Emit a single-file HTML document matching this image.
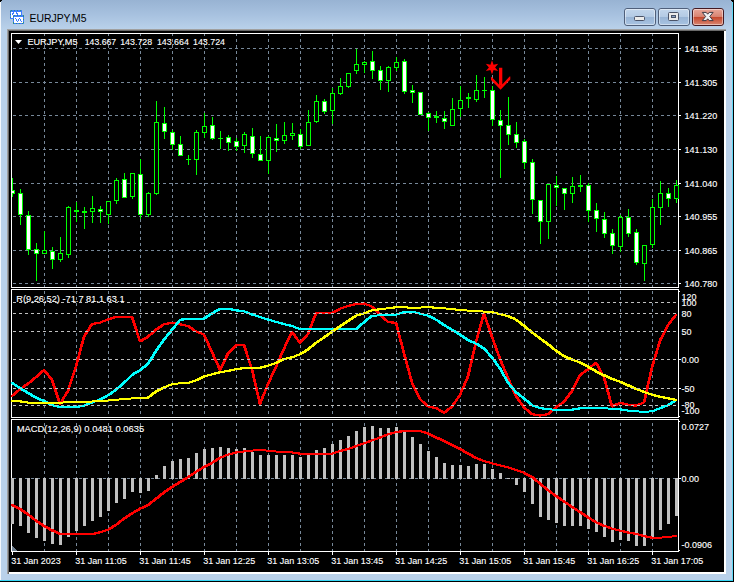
<!DOCTYPE html>
<html><head><meta charset="utf-8"><title>EURJPY,M5</title>
<style>html,body{margin:0;padding:0;background:#b9d1ea;overflow:hidden}svg{display:block}text{font-family:"Liberation Sans",Arial,sans-serif;font-size:9px;fill:#fff;stroke:#fff;stroke-width:0.12px}.t{font-size:11.5px;fill:#000;stroke:none}</style></head><body>
<svg width="734" height="582" viewBox="0 0 734 582">
<defs><linearGradient id="tb" x1="0" y1="0" x2="0" y2="1"><stop offset="0" stop-color="#98b3d3"/><stop offset="0.5" stop-color="#a7c1df"/><stop offset="1" stop-color="#b9d1ea"/></linearGradient><linearGradient id="bt" x1="0" y1="0" x2="0" y2="1"><stop offset="0" stop-color="#c3d6ec"/><stop offset="0.47" stop-color="#b4cbe5"/><stop offset="0.5" stop-color="#98b4d5"/><stop offset="1" stop-color="#a9c4e2"/></linearGradient><linearGradient id="cl" x1="0" y1="0" x2="0" y2="1"><stop offset="0" stop-color="#e9a99c"/><stop offset="0.47" stop-color="#d98472"/><stop offset="0.5" stop-color="#c5452a"/><stop offset="1" stop-color="#d98a76"/></linearGradient></defs>
<rect x="0" y="0" width="734" height="582" fill="#b9d1ea"/>
<rect x="0" y="0" width="734" height="29" fill="url(#tb)"/>
<rect x="0" y="2" width="1" height="580" fill="#f4f8fc"/>
<rect x="732" y="2" width="1" height="579" fill="#5fd8f5"/>
<rect x="733" y="0" width="1" height="582" fill="#000"/>
<rect x="0" y="580" width="733" height="1" fill="#35d6f5"/>
<rect x="0" y="581" width="734" height="1" fill="#000"/>
<rect x="0" y="0" width="2" height="1" fill="#000"/>
<rect x="0" y="1" width="1" height="1" fill="#000"/>
<rect x="731" y="0" width="3" height="1" fill="#000"/>
<rect x="732" y="1" width="2" height="1" fill="#000"/>
<rect x="7" y="29" width="719" height="545" fill="#a0a0a0"/>
<rect x="8" y="30" width="718" height="544" fill="#696969"/>
<rect x="9" y="31" width="717" height="543" fill="#fff"/>
<rect x="9" y="31" width="715" height="541" fill="#000"/>
<g shape-rendering="crispEdges">
<line x1="44.5" y1="34" x2="44.5" y2="287" stroke="#778899" stroke-width="1" stroke-dasharray="3 3" stroke-dashoffset="1"/>
<line x1="44.5" y1="290" x2="44.5" y2="417" stroke="#778899" stroke-width="1" stroke-dasharray="3 3" stroke-dashoffset="5"/>
<line x1="44.5" y1="420" x2="44.5" y2="551" stroke="#778899" stroke-width="1" stroke-dasharray="3 3" stroke-dashoffset="3"/>
<line x1="76.5" y1="34" x2="76.5" y2="287" stroke="#778899" stroke-width="1" stroke-dasharray="3 3" stroke-dashoffset="1"/>
<line x1="76.5" y1="290" x2="76.5" y2="417" stroke="#778899" stroke-width="1" stroke-dasharray="3 3" stroke-dashoffset="5"/>
<line x1="76.5" y1="420" x2="76.5" y2="551" stroke="#778899" stroke-width="1" stroke-dasharray="3 3" stroke-dashoffset="3"/>
<line x1="108.5" y1="34" x2="108.5" y2="287" stroke="#778899" stroke-width="1" stroke-dasharray="3 3" stroke-dashoffset="1"/>
<line x1="108.5" y1="290" x2="108.5" y2="417" stroke="#778899" stroke-width="1" stroke-dasharray="3 3" stroke-dashoffset="5"/>
<line x1="108.5" y1="420" x2="108.5" y2="551" stroke="#778899" stroke-width="1" stroke-dasharray="3 3" stroke-dashoffset="3"/>
<line x1="140.5" y1="34" x2="140.5" y2="287" stroke="#778899" stroke-width="1" stroke-dasharray="3 3" stroke-dashoffset="1"/>
<line x1="140.5" y1="290" x2="140.5" y2="417" stroke="#778899" stroke-width="1" stroke-dasharray="3 3" stroke-dashoffset="5"/>
<line x1="140.5" y1="420" x2="140.5" y2="551" stroke="#778899" stroke-width="1" stroke-dasharray="3 3" stroke-dashoffset="3"/>
<line x1="172.5" y1="34" x2="172.5" y2="287" stroke="#778899" stroke-width="1" stroke-dasharray="3 3" stroke-dashoffset="1"/>
<line x1="172.5" y1="290" x2="172.5" y2="417" stroke="#778899" stroke-width="1" stroke-dasharray="3 3" stroke-dashoffset="5"/>
<line x1="172.5" y1="420" x2="172.5" y2="551" stroke="#778899" stroke-width="1" stroke-dasharray="3 3" stroke-dashoffset="3"/>
<line x1="204.5" y1="34" x2="204.5" y2="287" stroke="#778899" stroke-width="1" stroke-dasharray="3 3" stroke-dashoffset="1"/>
<line x1="204.5" y1="290" x2="204.5" y2="417" stroke="#778899" stroke-width="1" stroke-dasharray="3 3" stroke-dashoffset="5"/>
<line x1="204.5" y1="420" x2="204.5" y2="551" stroke="#778899" stroke-width="1" stroke-dasharray="3 3" stroke-dashoffset="3"/>
<line x1="236.5" y1="34" x2="236.5" y2="287" stroke="#778899" stroke-width="1" stroke-dasharray="3 3" stroke-dashoffset="1"/>
<line x1="236.5" y1="290" x2="236.5" y2="417" stroke="#778899" stroke-width="1" stroke-dasharray="3 3" stroke-dashoffset="5"/>
<line x1="236.5" y1="420" x2="236.5" y2="551" stroke="#778899" stroke-width="1" stroke-dasharray="3 3" stroke-dashoffset="3"/>
<line x1="268.5" y1="34" x2="268.5" y2="287" stroke="#778899" stroke-width="1" stroke-dasharray="3 3" stroke-dashoffset="1"/>
<line x1="268.5" y1="290" x2="268.5" y2="417" stroke="#778899" stroke-width="1" stroke-dasharray="3 3" stroke-dashoffset="5"/>
<line x1="268.5" y1="420" x2="268.5" y2="551" stroke="#778899" stroke-width="1" stroke-dasharray="3 3" stroke-dashoffset="3"/>
<line x1="300.5" y1="34" x2="300.5" y2="287" stroke="#778899" stroke-width="1" stroke-dasharray="3 3" stroke-dashoffset="1"/>
<line x1="300.5" y1="290" x2="300.5" y2="417" stroke="#778899" stroke-width="1" stroke-dasharray="3 3" stroke-dashoffset="5"/>
<line x1="300.5" y1="420" x2="300.5" y2="551" stroke="#778899" stroke-width="1" stroke-dasharray="3 3" stroke-dashoffset="3"/>
<line x1="332.5" y1="34" x2="332.5" y2="287" stroke="#778899" stroke-width="1" stroke-dasharray="3 3" stroke-dashoffset="1"/>
<line x1="332.5" y1="290" x2="332.5" y2="417" stroke="#778899" stroke-width="1" stroke-dasharray="3 3" stroke-dashoffset="5"/>
<line x1="332.5" y1="420" x2="332.5" y2="551" stroke="#778899" stroke-width="1" stroke-dasharray="3 3" stroke-dashoffset="3"/>
<line x1="364.5" y1="34" x2="364.5" y2="287" stroke="#778899" stroke-width="1" stroke-dasharray="3 3" stroke-dashoffset="1"/>
<line x1="364.5" y1="290" x2="364.5" y2="417" stroke="#778899" stroke-width="1" stroke-dasharray="3 3" stroke-dashoffset="5"/>
<line x1="364.5" y1="420" x2="364.5" y2="551" stroke="#778899" stroke-width="1" stroke-dasharray="3 3" stroke-dashoffset="3"/>
<line x1="396.5" y1="34" x2="396.5" y2="287" stroke="#778899" stroke-width="1" stroke-dasharray="3 3" stroke-dashoffset="1"/>
<line x1="396.5" y1="290" x2="396.5" y2="417" stroke="#778899" stroke-width="1" stroke-dasharray="3 3" stroke-dashoffset="5"/>
<line x1="396.5" y1="420" x2="396.5" y2="551" stroke="#778899" stroke-width="1" stroke-dasharray="3 3" stroke-dashoffset="3"/>
<line x1="428.5" y1="34" x2="428.5" y2="287" stroke="#778899" stroke-width="1" stroke-dasharray="3 3" stroke-dashoffset="1"/>
<line x1="428.5" y1="290" x2="428.5" y2="417" stroke="#778899" stroke-width="1" stroke-dasharray="3 3" stroke-dashoffset="5"/>
<line x1="428.5" y1="420" x2="428.5" y2="551" stroke="#778899" stroke-width="1" stroke-dasharray="3 3" stroke-dashoffset="3"/>
<line x1="460.5" y1="34" x2="460.5" y2="287" stroke="#778899" stroke-width="1" stroke-dasharray="3 3" stroke-dashoffset="1"/>
<line x1="460.5" y1="290" x2="460.5" y2="417" stroke="#778899" stroke-width="1" stroke-dasharray="3 3" stroke-dashoffset="5"/>
<line x1="460.5" y1="420" x2="460.5" y2="551" stroke="#778899" stroke-width="1" stroke-dasharray="3 3" stroke-dashoffset="3"/>
<line x1="492.5" y1="34" x2="492.5" y2="287" stroke="#778899" stroke-width="1" stroke-dasharray="3 3" stroke-dashoffset="1"/>
<line x1="492.5" y1="290" x2="492.5" y2="417" stroke="#778899" stroke-width="1" stroke-dasharray="3 3" stroke-dashoffset="5"/>
<line x1="492.5" y1="420" x2="492.5" y2="551" stroke="#778899" stroke-width="1" stroke-dasharray="3 3" stroke-dashoffset="3"/>
<line x1="524.5" y1="34" x2="524.5" y2="287" stroke="#778899" stroke-width="1" stroke-dasharray="3 3" stroke-dashoffset="1"/>
<line x1="524.5" y1="290" x2="524.5" y2="417" stroke="#778899" stroke-width="1" stroke-dasharray="3 3" stroke-dashoffset="5"/>
<line x1="524.5" y1="420" x2="524.5" y2="551" stroke="#778899" stroke-width="1" stroke-dasharray="3 3" stroke-dashoffset="3"/>
<line x1="556.5" y1="34" x2="556.5" y2="287" stroke="#778899" stroke-width="1" stroke-dasharray="3 3" stroke-dashoffset="1"/>
<line x1="556.5" y1="290" x2="556.5" y2="417" stroke="#778899" stroke-width="1" stroke-dasharray="3 3" stroke-dashoffset="5"/>
<line x1="556.5" y1="420" x2="556.5" y2="551" stroke="#778899" stroke-width="1" stroke-dasharray="3 3" stroke-dashoffset="3"/>
<line x1="588.5" y1="34" x2="588.5" y2="287" stroke="#778899" stroke-width="1" stroke-dasharray="3 3" stroke-dashoffset="1"/>
<line x1="588.5" y1="290" x2="588.5" y2="417" stroke="#778899" stroke-width="1" stroke-dasharray="3 3" stroke-dashoffset="5"/>
<line x1="588.5" y1="420" x2="588.5" y2="551" stroke="#778899" stroke-width="1" stroke-dasharray="3 3" stroke-dashoffset="3"/>
<line x1="620.5" y1="34" x2="620.5" y2="287" stroke="#778899" stroke-width="1" stroke-dasharray="3 3" stroke-dashoffset="1"/>
<line x1="620.5" y1="290" x2="620.5" y2="417" stroke="#778899" stroke-width="1" stroke-dasharray="3 3" stroke-dashoffset="5"/>
<line x1="620.5" y1="420" x2="620.5" y2="551" stroke="#778899" stroke-width="1" stroke-dasharray="3 3" stroke-dashoffset="3"/>
<line x1="652.5" y1="34" x2="652.5" y2="287" stroke="#778899" stroke-width="1" stroke-dasharray="3 3" stroke-dashoffset="1"/>
<line x1="652.5" y1="290" x2="652.5" y2="417" stroke="#778899" stroke-width="1" stroke-dasharray="3 3" stroke-dashoffset="5"/>
<line x1="652.5" y1="420" x2="652.5" y2="551" stroke="#778899" stroke-width="1" stroke-dasharray="3 3" stroke-dashoffset="3"/>
<line x1="12" y1="48.5" x2="678" y2="48.5" stroke="#778899" stroke-width="1" stroke-dasharray="3 3" stroke-dashoffset="5"/>
<line x1="12" y1="82.5" x2="678" y2="82.5" stroke="#778899" stroke-width="1" stroke-dasharray="3 3" stroke-dashoffset="5"/>
<line x1="12" y1="115.5" x2="678" y2="115.5" stroke="#778899" stroke-width="1" stroke-dasharray="3 3" stroke-dashoffset="5"/>
<line x1="12" y1="149.5" x2="678" y2="149.5" stroke="#778899" stroke-width="1" stroke-dasharray="3 3" stroke-dashoffset="5"/>
<line x1="12" y1="183.5" x2="678" y2="183.5" stroke="#778899" stroke-width="1" stroke-dasharray="3 3" stroke-dashoffset="5"/>
<line x1="12" y1="216.5" x2="678" y2="216.5" stroke="#778899" stroke-width="1" stroke-dasharray="3 3" stroke-dashoffset="5"/>
<line x1="12" y1="250.5" x2="678" y2="250.5" stroke="#778899" stroke-width="1" stroke-dasharray="3 3" stroke-dashoffset="5"/>
<line x1="12" y1="283.5" x2="678" y2="283.5" stroke="#778899" stroke-width="1" stroke-dasharray="3 3" stroke-dashoffset="5"/>
<line x1="12" y1="478.5" x2="678" y2="478.5" stroke="#778899" stroke-width="1" stroke-dasharray="3 3" stroke-dashoffset="5"/>
<rect x="11" y="33" width="668" height="1" fill="#fff"/>
<rect x="11" y="287" width="668" height="1" fill="#fff"/>
<rect x="11" y="33" width="1" height="255" fill="#fff"/>
<rect x="678" y="33" width="1" height="255" fill="#fff"/>
<rect x="11" y="289" width="668" height="1" fill="#fff"/>
<rect x="11" y="417" width="668" height="1" fill="#fff"/>
<rect x="11" y="289" width="1" height="129" fill="#fff"/>
<rect x="678" y="289" width="1" height="129" fill="#fff"/>
<rect x="11" y="419" width="668" height="1" fill="#fff"/>
<rect x="11" y="551" width="668" height="1" fill="#fff"/>
<rect x="11" y="419" width="1" height="133" fill="#fff"/>
<rect x="678" y="419" width="1" height="133" fill="#fff"/>
<rect x="679" y="48" width="2" height="1" fill="#fff"/>
<rect x="679" y="82" width="2" height="1" fill="#fff"/>
<rect x="679" y="115" width="2" height="1" fill="#fff"/>
<rect x="679" y="149" width="2" height="1" fill="#fff"/>
<rect x="679" y="183" width="2" height="1" fill="#fff"/>
<rect x="679" y="216" width="2" height="1" fill="#fff"/>
<rect x="679" y="250" width="2" height="1" fill="#fff"/>
<rect x="679" y="283" width="2" height="1" fill="#fff"/>
<rect x="679" y="359" width="2" height="1" fill="#fff"/>
<rect x="679" y="388" width="2" height="1" fill="#fff"/>
<rect x="679" y="478" width="2" height="1" fill="#fff"/>
<rect x="679" y="291" width="1" height="1" fill="#fff"/>
<rect x="679" y="416" width="1" height="1" fill="#fff"/>
<rect x="679" y="421" width="1" height="1" fill="#fff"/>
<rect x="679" y="550" width="1" height="1" fill="#fff"/>
<rect x="12" y="552" width="1" height="3" fill="#fff"/>
<rect x="76" y="552" width="1" height="3" fill="#fff"/>
<rect x="140" y="552" width="1" height="3" fill="#fff"/>
<rect x="204" y="552" width="1" height="3" fill="#fff"/>
<rect x="268" y="552" width="1" height="3" fill="#fff"/>
<rect x="332" y="552" width="1" height="3" fill="#fff"/>
<rect x="396" y="552" width="1" height="3" fill="#fff"/>
<rect x="460" y="552" width="1" height="3" fill="#fff"/>
<rect x="524" y="552" width="1" height="3" fill="#fff"/>
<rect x="588" y="552" width="1" height="3" fill="#fff"/>
<rect x="652" y="552" width="1" height="3" fill="#fff"/>
<polygon points="12,546 12,551 17,551" fill="#708090"/>
<rect x="12" y="178" width="1" height="19" fill="#00ff00"/>
<rect x="10" y="190" width="5" height="4" fill="#00ff00"/>
<rect x="11" y="191" width="3" height="2" fill="#fff"/>
<rect x="20" y="189" width="1" height="36" fill="#00ff00"/>
<rect x="18" y="193" width="5" height="22" fill="#00ff00"/>
<rect x="19" y="194" width="3" height="20" fill="#fff"/>
<rect x="28" y="211" width="1" height="44" fill="#00ff00"/>
<rect x="26" y="215" width="5" height="35" fill="#00ff00"/>
<rect x="27" y="216" width="3" height="33" fill="#fff"/>
<rect x="36" y="243" width="1" height="38" fill="#00ff00"/>
<rect x="34" y="249" width="5" height="5" fill="#00ff00"/>
<rect x="35" y="250" width="3" height="3" fill="#fff"/>
<rect x="44" y="231" width="1" height="23" fill="#00ff00"/>
<rect x="42" y="250" width="5" height="4" fill="#00ff00"/>
<rect x="43" y="251" width="3" height="2" fill="#000"/>
<rect x="52" y="247" width="1" height="22" fill="#00ff00"/>
<rect x="50" y="251" width="5" height="9" fill="#00ff00"/>
<rect x="51" y="252" width="3" height="7" fill="#fff"/>
<rect x="60" y="237" width="1" height="25" fill="#00ff00"/>
<rect x="58" y="253" width="5" height="7" fill="#00ff00"/>
<rect x="59" y="254" width="3" height="5" fill="#000"/>
<rect x="68" y="206" width="1" height="52" fill="#00ff00"/>
<rect x="66" y="207" width="5" height="48" fill="#00ff00"/>
<rect x="67" y="208" width="3" height="46" fill="#000"/>
<rect x="76" y="202" width="1" height="20" fill="#00ff00"/>
<rect x="74" y="210" width="5" height="2" fill="#00ff00"/>
<rect x="84" y="207" width="1" height="22" fill="#00ff00"/>
<rect x="82" y="211" width="5" height="2" fill="#00ff00"/>
<rect x="92" y="196" width="1" height="27" fill="#00ff00"/>
<rect x="90" y="208" width="5" height="4" fill="#00ff00"/>
<rect x="91" y="209" width="3" height="2" fill="#000"/>
<rect x="100" y="206" width="1" height="17" fill="#00ff00"/>
<rect x="98" y="209" width="5" height="3" fill="#00ff00"/>
<rect x="99" y="210" width="3" height="1" fill="#fff"/>
<rect x="108" y="201" width="1" height="23" fill="#00ff00"/>
<rect x="106" y="201" width="5" height="14" fill="#00ff00"/>
<rect x="107" y="202" width="3" height="12" fill="#000"/>
<rect x="116" y="178" width="1" height="26" fill="#00ff00"/>
<rect x="114" y="180" width="5" height="21" fill="#00ff00"/>
<rect x="115" y="181" width="3" height="19" fill="#000"/>
<rect x="124" y="173" width="1" height="25" fill="#00ff00"/>
<rect x="122" y="179" width="5" height="19" fill="#00ff00"/>
<rect x="123" y="180" width="3" height="17" fill="#fff"/>
<rect x="132" y="173" width="1" height="26" fill="#00ff00"/>
<rect x="130" y="173" width="5" height="24" fill="#00ff00"/>
<rect x="131" y="174" width="3" height="22" fill="#000"/>
<rect x="140" y="159" width="1" height="60" fill="#00ff00"/>
<rect x="138" y="174" width="5" height="41" fill="#00ff00"/>
<rect x="139" y="175" width="3" height="39" fill="#fff"/>
<rect x="148" y="192" width="1" height="25" fill="#00ff00"/>
<rect x="146" y="193" width="5" height="22" fill="#00ff00"/>
<rect x="147" y="194" width="3" height="20" fill="#000"/>
<rect x="156" y="101" width="1" height="94" fill="#00ff00"/>
<rect x="154" y="122" width="5" height="72" fill="#00ff00"/>
<rect x="155" y="123" width="3" height="70" fill="#000"/>
<rect x="164" y="107" width="1" height="32" fill="#00ff00"/>
<rect x="162" y="123" width="5" height="9" fill="#00ff00"/>
<rect x="163" y="124" width="3" height="7" fill="#fff"/>
<rect x="172" y="130" width="1" height="20" fill="#00ff00"/>
<rect x="170" y="132" width="5" height="13" fill="#00ff00"/>
<rect x="171" y="133" width="3" height="11" fill="#fff"/>
<rect x="180" y="136" width="1" height="20" fill="#00ff00"/>
<rect x="178" y="144" width="5" height="12" fill="#00ff00"/>
<rect x="179" y="145" width="3" height="10" fill="#fff"/>
<rect x="188" y="155" width="1" height="10" fill="#00ff00"/>
<rect x="186" y="159" width="5" height="1" fill="#00ff00"/>
<rect x="196" y="130" width="1" height="45" fill="#00ff00"/>
<rect x="194" y="132" width="5" height="28" fill="#00ff00"/>
<rect x="195" y="133" width="3" height="26" fill="#000"/>
<rect x="204" y="113" width="1" height="25" fill="#00ff00"/>
<rect x="202" y="126" width="5" height="7" fill="#00ff00"/>
<rect x="203" y="127" width="3" height="5" fill="#000"/>
<rect x="212" y="117" width="1" height="23" fill="#00ff00"/>
<rect x="210" y="125" width="5" height="14" fill="#00ff00"/>
<rect x="211" y="126" width="3" height="12" fill="#fff"/>
<rect x="220" y="131" width="1" height="18" fill="#00ff00"/>
<rect x="218" y="138" width="5" height="1" fill="#00ff00"/>
<rect x="228" y="135" width="1" height="16" fill="#00ff00"/>
<rect x="226" y="137" width="5" height="6" fill="#00ff00"/>
<rect x="227" y="138" width="3" height="4" fill="#fff"/>
<rect x="236" y="138" width="1" height="13" fill="#00ff00"/>
<rect x="234" y="141" width="5" height="6" fill="#00ff00"/>
<rect x="235" y="142" width="3" height="4" fill="#fff"/>
<rect x="244" y="132" width="1" height="21" fill="#00ff00"/>
<rect x="242" y="134" width="5" height="12" fill="#00ff00"/>
<rect x="243" y="135" width="3" height="10" fill="#000"/>
<rect x="252" y="128" width="1" height="30" fill="#00ff00"/>
<rect x="250" y="136" width="5" height="18" fill="#00ff00"/>
<rect x="251" y="137" width="3" height="16" fill="#fff"/>
<rect x="260" y="136" width="1" height="25" fill="#00ff00"/>
<rect x="258" y="154" width="5" height="7" fill="#00ff00"/>
<rect x="259" y="155" width="3" height="5" fill="#fff"/>
<rect x="268" y="136" width="1" height="38" fill="#00ff00"/>
<rect x="266" y="137" width="5" height="24" fill="#00ff00"/>
<rect x="267" y="138" width="3" height="22" fill="#000"/>
<rect x="276" y="124" width="1" height="28" fill="#00ff00"/>
<rect x="274" y="138" width="5" height="3" fill="#00ff00"/>
<rect x="275" y="139" width="3" height="1" fill="#fff"/>
<rect x="284" y="122" width="1" height="22" fill="#00ff00"/>
<rect x="282" y="135" width="5" height="6" fill="#00ff00"/>
<rect x="283" y="136" width="3" height="4" fill="#000"/>
<rect x="292" y="123" width="1" height="17" fill="#00ff00"/>
<rect x="290" y="133" width="5" height="3" fill="#00ff00"/>
<rect x="291" y="134" width="3" height="1" fill="#000"/>
<rect x="300" y="129" width="1" height="20" fill="#00ff00"/>
<rect x="298" y="134" width="5" height="13" fill="#00ff00"/>
<rect x="299" y="135" width="3" height="11" fill="#fff"/>
<rect x="308" y="110" width="1" height="36" fill="#00ff00"/>
<rect x="306" y="122" width="5" height="24" fill="#00ff00"/>
<rect x="307" y="123" width="3" height="22" fill="#000"/>
<rect x="316" y="95" width="1" height="28" fill="#00ff00"/>
<rect x="314" y="101" width="5" height="21" fill="#00ff00"/>
<rect x="315" y="102" width="3" height="19" fill="#000"/>
<rect x="324" y="99" width="1" height="15" fill="#00ff00"/>
<rect x="322" y="101" width="5" height="11" fill="#00ff00"/>
<rect x="323" y="102" width="3" height="9" fill="#fff"/>
<rect x="332" y="88" width="1" height="36" fill="#00ff00"/>
<rect x="330" y="93" width="5" height="18" fill="#00ff00"/>
<rect x="331" y="94" width="3" height="16" fill="#000"/>
<rect x="340" y="78" width="1" height="17" fill="#00ff00"/>
<rect x="338" y="86" width="5" height="8" fill="#00ff00"/>
<rect x="339" y="87" width="3" height="6" fill="#000"/>
<rect x="348" y="73" width="1" height="15" fill="#00ff00"/>
<rect x="346" y="73" width="5" height="14" fill="#00ff00"/>
<rect x="347" y="74" width="3" height="12" fill="#000"/>
<rect x="356" y="49" width="1" height="25" fill="#00ff00"/>
<rect x="354" y="64" width="5" height="7" fill="#00ff00"/>
<rect x="355" y="65" width="3" height="5" fill="#000"/>
<rect x="364" y="61" width="1" height="12" fill="#00ff00"/>
<rect x="362" y="62" width="5" height="3" fill="#00ff00"/>
<rect x="363" y="63" width="3" height="1" fill="#000"/>
<rect x="372" y="51" width="1" height="28" fill="#00ff00"/>
<rect x="370" y="61" width="5" height="10" fill="#00ff00"/>
<rect x="371" y="62" width="3" height="8" fill="#fff"/>
<rect x="380" y="66" width="1" height="24" fill="#00ff00"/>
<rect x="378" y="70" width="5" height="11" fill="#00ff00"/>
<rect x="379" y="71" width="3" height="9" fill="#fff"/>
<rect x="388" y="66" width="1" height="26" fill="#00ff00"/>
<rect x="386" y="67" width="5" height="14" fill="#00ff00"/>
<rect x="387" y="68" width="3" height="12" fill="#000"/>
<rect x="396" y="57" width="1" height="14" fill="#00ff00"/>
<rect x="394" y="62" width="5" height="6" fill="#00ff00"/>
<rect x="395" y="63" width="3" height="4" fill="#000"/>
<rect x="404" y="59" width="1" height="35" fill="#00ff00"/>
<rect x="402" y="61" width="5" height="31" fill="#00ff00"/>
<rect x="403" y="62" width="3" height="29" fill="#fff"/>
<rect x="412" y="85" width="1" height="18" fill="#00ff00"/>
<rect x="410" y="90" width="5" height="3" fill="#00ff00"/>
<rect x="411" y="91" width="3" height="1" fill="#fff"/>
<rect x="420" y="92" width="1" height="23" fill="#00ff00"/>
<rect x="418" y="92" width="5" height="23" fill="#00ff00"/>
<rect x="419" y="93" width="3" height="21" fill="#fff"/>
<rect x="428" y="112" width="1" height="19" fill="#00ff00"/>
<rect x="426" y="113" width="5" height="5" fill="#00ff00"/>
<rect x="427" y="114" width="3" height="3" fill="#fff"/>
<rect x="436" y="111" width="1" height="12" fill="#00ff00"/>
<rect x="434" y="116" width="5" height="2" fill="#00ff00"/>
<rect x="444" y="111" width="1" height="18" fill="#00ff00"/>
<rect x="442" y="118" width="5" height="4" fill="#00ff00"/>
<rect x="443" y="119" width="3" height="2" fill="#fff"/>
<rect x="452" y="98" width="1" height="28" fill="#00ff00"/>
<rect x="450" y="109" width="5" height="17" fill="#00ff00"/>
<rect x="451" y="110" width="3" height="15" fill="#000"/>
<rect x="460" y="86" width="1" height="31" fill="#00ff00"/>
<rect x="458" y="100" width="5" height="9" fill="#00ff00"/>
<rect x="459" y="101" width="3" height="7" fill="#000"/>
<rect x="468" y="93" width="1" height="15" fill="#00ff00"/>
<rect x="466" y="97" width="5" height="2" fill="#00ff00"/>
<rect x="476" y="75" width="1" height="27" fill="#00ff00"/>
<rect x="474" y="90" width="5" height="10" fill="#00ff00"/>
<rect x="475" y="91" width="3" height="8" fill="#000"/>
<rect x="484" y="77" width="1" height="21" fill="#00ff00"/>
<rect x="482" y="90" width="5" height="1" fill="#00ff00"/>
<rect x="492" y="86" width="1" height="40" fill="#00ff00"/>
<rect x="490" y="90" width="5" height="30" fill="#00ff00"/>
<rect x="491" y="91" width="3" height="28" fill="#fff"/>
<rect x="500" y="110" width="1" height="68" fill="#00ff00"/>
<rect x="498" y="120" width="5" height="6" fill="#00ff00"/>
<rect x="499" y="121" width="3" height="4" fill="#fff"/>
<rect x="508" y="97" width="1" height="48" fill="#00ff00"/>
<rect x="506" y="125" width="5" height="10" fill="#00ff00"/>
<rect x="507" y="126" width="3" height="8" fill="#fff"/>
<rect x="516" y="122" width="1" height="26" fill="#00ff00"/>
<rect x="514" y="134" width="5" height="9" fill="#00ff00"/>
<rect x="515" y="135" width="3" height="7" fill="#fff"/>
<rect x="524" y="139" width="1" height="30" fill="#00ff00"/>
<rect x="522" y="141" width="5" height="22" fill="#00ff00"/>
<rect x="523" y="142" width="3" height="20" fill="#fff"/>
<rect x="532" y="159" width="1" height="55" fill="#00ff00"/>
<rect x="530" y="162" width="5" height="38" fill="#00ff00"/>
<rect x="531" y="163" width="3" height="36" fill="#fff"/>
<rect x="540" y="200" width="1" height="44" fill="#00ff00"/>
<rect x="538" y="200" width="5" height="22" fill="#00ff00"/>
<rect x="539" y="201" width="3" height="20" fill="#fff"/>
<rect x="548" y="184" width="1" height="55" fill="#00ff00"/>
<rect x="546" y="184" width="5" height="38" fill="#00ff00"/>
<rect x="547" y="185" width="3" height="36" fill="#000"/>
<rect x="556" y="176" width="1" height="30" fill="#00ff00"/>
<rect x="554" y="185" width="5" height="3" fill="#00ff00"/>
<rect x="555" y="186" width="3" height="1" fill="#fff"/>
<rect x="564" y="188" width="1" height="22" fill="#00ff00"/>
<rect x="562" y="188" width="5" height="6" fill="#00ff00"/>
<rect x="563" y="189" width="3" height="4" fill="#fff"/>
<rect x="572" y="177" width="1" height="26" fill="#00ff00"/>
<rect x="570" y="186" width="5" height="8" fill="#00ff00"/>
<rect x="571" y="187" width="3" height="6" fill="#000"/>
<rect x="580" y="175" width="1" height="17" fill="#00ff00"/>
<rect x="578" y="185" width="5" height="2" fill="#00ff00"/>
<rect x="588" y="183" width="1" height="39" fill="#00ff00"/>
<rect x="586" y="185" width="5" height="26" fill="#00ff00"/>
<rect x="587" y="186" width="3" height="24" fill="#fff"/>
<rect x="596" y="203" width="1" height="29" fill="#00ff00"/>
<rect x="594" y="210" width="5" height="9" fill="#00ff00"/>
<rect x="595" y="211" width="3" height="7" fill="#fff"/>
<rect x="604" y="212" width="1" height="26" fill="#00ff00"/>
<rect x="602" y="219" width="5" height="15" fill="#00ff00"/>
<rect x="603" y="220" width="3" height="13" fill="#fff"/>
<rect x="612" y="229" width="1" height="25" fill="#00ff00"/>
<rect x="610" y="233" width="5" height="13" fill="#00ff00"/>
<rect x="611" y="234" width="3" height="11" fill="#fff"/>
<rect x="620" y="215" width="1" height="37" fill="#00ff00"/>
<rect x="618" y="217" width="5" height="30" fill="#00ff00"/>
<rect x="619" y="218" width="3" height="28" fill="#000"/>
<rect x="628" y="209" width="1" height="28" fill="#00ff00"/>
<rect x="626" y="217" width="5" height="17" fill="#00ff00"/>
<rect x="627" y="218" width="3" height="15" fill="#fff"/>
<rect x="636" y="229" width="1" height="36" fill="#00ff00"/>
<rect x="634" y="232" width="5" height="31" fill="#00ff00"/>
<rect x="635" y="233" width="3" height="29" fill="#fff"/>
<rect x="644" y="245" width="1" height="36" fill="#00ff00"/>
<rect x="642" y="245" width="5" height="19" fill="#00ff00"/>
<rect x="643" y="246" width="3" height="17" fill="#000"/>
<rect x="652" y="199" width="1" height="49" fill="#00ff00"/>
<rect x="650" y="207" width="5" height="38" fill="#00ff00"/>
<rect x="651" y="208" width="3" height="36" fill="#000"/>
<rect x="660" y="181" width="1" height="44" fill="#00ff00"/>
<rect x="658" y="193" width="5" height="15" fill="#00ff00"/>
<rect x="659" y="194" width="3" height="13" fill="#000"/>
<rect x="668" y="188" width="1" height="19" fill="#00ff00"/>
<rect x="666" y="193" width="5" height="6" fill="#00ff00"/>
<rect x="667" y="194" width="3" height="4" fill="#fff"/>
<rect x="676" y="180" width="1" height="23" fill="#00ff00"/>
<rect x="674" y="185" width="5" height="14" fill="#00ff00"/>
<rect x="675" y="186" width="3" height="12" fill="#000"/>
<rect x="9" y="160" width="2" height="60" fill="#000"/>
<rect x="11" y="160" width="1" height="60" fill="#fff"/>
</g>
<polygon points="492.0,60.2 493.6,64.7 498.2,63.8 495.1,67.4 498.2,71.0 493.6,70.1 492.0,74.6 490.4,70.1 485.8,71.0 488.9,67.4 485.8,63.8 490.4,64.7" fill="#ff0000"/>
<path d="M499,67.7h3.3v18h-3.3z M491,77h0.7l8.9,9.2l9,-9.6h0.7v2.9l-9.7,10.3l-9.6,-9.8z" fill="#ff0000"/>
<g shape-rendering="crispEdges">
<polyline points="12,396.0 20,389.2 28,383.7 36,377.1 44,370.0 52,379.8 60,404.0 68,390.8 76,366.5 84,336.7 92,324.1 100,322.6 108,319.5 116,316.8 124,316.8 132,316.8 140,341.5 148,336.7 156,329.8 164,324.2 172,322.7 180,324.3 188,326.0 196,331.5 204,334.6 212,352.1 220,369.8 228,353.5 236,345.1 244,345.1 252,369.5 260,403.9 268,384.0 276,366.8 284,348.6 292,331.9 300,342.9 308,334.0 316,313.1 324,313.1 332,313.1 340,308.8 348,306.0 356,304.0 364,303.5 372,306.5 380,314.7 388,321.9 396,323.0 404,353.4 412,382.6 420,399.1 428,406.6 436,408.0 444,412.8 452,406.6 460,394.9 468,376.4 476,341.8 484,313.6 492,336.8 500,359.0 508,377.8 516,396.3 524,407.3 532,414.2 540,415.5 548,414.2 556,407.3 564,401.8 572,391.0 580,375.1 588,369.3 596,362.6 604,377.2 612,406.6 620,402.9 628,404.6 636,405.7 644,402.5 652,367.5 660,340.5 668,325.1 676,314.8" fill="none" stroke="#ff0000" stroke-width="2" stroke-linejoin="round" stroke-linecap="square"/>
<path d="M92,324.1L100,322.6M100,322.6L108,319.5M108,319.5L116,316.8M164,324.2L172,322.7M172,322.7L180,324.3M180,324.3L188,326.0M196,331.5L204,334.6M340,308.8L348,306.0M348,306.0L356,304.0M364,303.5L372,306.5M388,321.9L396,323.0M428,406.6L436,408.0M532,414.2L540,415.5M540,415.5L548,414.2M620,402.9L628,404.6M628,404.6L636,405.7M636,405.7L644,402.5" fill="none" stroke="#ff0000" stroke-width="2.3" stroke-linecap="butt"/>
<path d="M12,396.0L20,389.2M20,389.2L28,383.7M28,383.7L36,377.1M36,377.1L44,370.0M44,370.0L52,379.8M52,379.8L60,404.0M60,404.0L68,390.8M68,390.8L76,366.5M76,366.5L84,336.7M84,336.7L92,324.1M132,316.8L140,341.5M140,341.5L148,336.7M148,336.7L156,329.8M156,329.8L164,324.2M188,326.0L196,331.5M204,334.6L212,352.1M212,352.1L220,369.8M220,369.8L228,353.5M228,353.5L236,345.1M244,345.1L252,369.5M252,369.5L260,403.9M260,403.9L268,384.0M268,384.0L276,366.8M276,366.8L284,348.6M284,348.6L292,331.9M292,331.9L300,342.9M300,342.9L308,334.0M308,334.0L316,313.1M332,313.1L340,308.8M372,306.5L380,314.7M380,314.7L388,321.9M396,323.0L404,353.4M404,353.4L412,382.6M412,382.6L420,399.1M420,399.1L428,406.6M436,408.0L444,412.8M444,412.8L452,406.6M452,406.6L460,394.9M460,394.9L468,376.4M468,376.4L476,341.8M476,341.8L484,313.6M484,313.6L492,336.8M492,336.8L500,359.0M500,359.0L508,377.8M508,377.8L516,396.3M516,396.3L524,407.3M524,407.3L532,414.2M548,414.2L556,407.3M556,407.3L564,401.8M564,401.8L572,391.0M572,391.0L580,375.1M580,375.1L588,369.3M588,369.3L596,362.6M596,362.6L604,377.2M604,377.2L612,406.6M612,406.6L620,402.9M644,402.5L652,367.5M652,367.5L660,340.5M660,340.5L668,325.1M668,325.1L676,314.8" fill="none" stroke="#ff0000" stroke-width="2.7" stroke-linecap="butt"/>
<polyline points="12,382.9 20,388.1 28,392.9 36,397.7 44,401.1 52,405.2 60,406.9 68,407.0 76,406.9 84,405.7 92,402.5 100,399.4 108,395.6 116,389.7 124,382.9 132,375.0 140,370.2 148,363.8 156,351.0 164,339.5 172,329.8 180,319.8 188,318.8 196,318.8 204,318.8 212,313.4 220,308.8 228,308.8 236,310.3 244,311.3 252,314.5 260,317.0 268,319.5 276,321.9 284,324.1 292,326.0 300,329.1 308,329.1 316,329.1 324,329.1 332,329.1 340,329.1 348,329.1 356,329.1 364,322.3 372,315.7 380,315.4 388,315.1 396,314.7 404,312.0 412,311.7 420,313.6 428,315.7 436,319.5 444,325.0 452,329.8 460,334.6 468,340.1 476,343.5 484,348.6 492,357.4 500,368.6 508,382.6 516,392.2 524,398.4 532,405.2 540,408.0 548,409.4 556,409.6 564,409.6 572,409.6 580,408.4 588,408.3 596,408.0 604,408.3 612,408.7 620,409.4 628,410.5 636,411.4 644,411.7 652,411.4 660,408.3 668,405.2 676,400.0" fill="none" stroke="#00ffff" stroke-width="2" stroke-linejoin="round" stroke-linecap="square"/>
<path d="M52,405.2L60,406.9M76,406.9L84,405.7M84,405.7L92,402.5M92,402.5L100,399.4M180,319.8L188,318.8M228,308.8L236,310.3M236,310.3L244,311.3M244,311.3L252,314.5M252,314.5L260,317.0M260,317.0L268,319.5M268,319.5L276,321.9M276,321.9L284,324.1M284,324.1L292,326.0M292,326.0L300,329.1M396,314.7L404,312.0M412,311.7L420,313.6M420,313.6L428,315.7M532,405.2L540,408.0M540,408.0L548,409.4M572,409.6L580,408.4M620,409.4L628,410.5M652,411.4L660,408.3M660,408.3L668,405.2" fill="none" stroke="#00ffff" stroke-width="2.3" stroke-linecap="butt"/>
<path d="M12,382.9L20,388.1M20,388.1L28,392.9M28,392.9L36,397.7M36,397.7L44,401.1M44,401.1L52,405.2M100,399.4L108,395.6M108,395.6L116,389.7M116,389.7L124,382.9M124,382.9L132,375.0M132,375.0L140,370.2M140,370.2L148,363.8M148,363.8L156,351.0M156,351.0L164,339.5M164,339.5L172,329.8M172,329.8L180,319.8M204,318.8L212,313.4M212,313.4L220,308.8M356,329.1L364,322.3M364,322.3L372,315.7M428,315.7L436,319.5M436,319.5L444,325.0M444,325.0L452,329.8M452,329.8L460,334.6M460,334.6L468,340.1M468,340.1L476,343.5M476,343.5L484,348.6M484,348.6L492,357.4M492,357.4L500,368.6M500,368.6L508,382.6M508,382.6L516,392.2M516,392.2L524,398.4M524,398.4L532,405.2M668,405.2L676,400.0" fill="none" stroke="#00ffff" stroke-width="2.7" stroke-linecap="butt"/>
<polyline points="12,400.9 20,401.4 28,402.5 36,402.8 44,402.8 52,402.8 60,402.8 68,402.1 76,401.8 84,401.8 92,401.5 100,400.9 108,400.5 116,399.8 124,399.1 132,398.4 140,398.0 148,397.7 156,391.5 164,387.4 172,384.2 180,383.3 188,383.0 196,380.5 204,376.4 212,374.3 220,372.3 228,370.9 236,369.2 244,368.1 252,367.8 260,367.8 268,365.8 276,363.1 284,359.1 292,357.3 300,354.3 308,349.4 316,342.8 324,337.5 332,331.7 340,326.4 348,321.1 356,315.6 364,313.4 372,310.3 380,309.2 388,308.3 396,307.2 404,307.2 412,307.9 420,307.6 428,306.8 436,307.9 444,308.3 452,309.2 460,309.9 468,310.6 476,311.0 484,311.6 492,312.3 500,314.0 508,316.1 516,319.5 524,325.8 532,332.4 540,338.4 548,344.2 556,350.7 564,356.2 572,359.5 580,362.4 588,366.7 596,371.3 604,375.3 612,378.8 620,381.7 628,385.3 636,388.8 644,391.9 652,394.7 660,396.7 668,398.4 676,399.8" fill="none" stroke="#ffff00" stroke-width="2" stroke-linejoin="round" stroke-linecap="square"/>
<path d="M20,401.4L28,402.5M164,387.4L172,384.2M188,383.0L196,380.5M204,376.4L212,374.3M212,374.3L220,372.3M220,372.3L228,370.9M228,370.9L236,369.2M236,369.2L244,368.1M260,367.8L268,365.8M268,365.8L276,363.1M284,359.1L292,357.3M292,357.3L300,354.3M356,315.6L364,313.4M364,313.4L372,310.3M372,310.3L380,309.2M388,308.3L396,307.2M428,306.8L436,307.9M492,312.3L500,314.0M500,314.0L508,316.1M572,359.5L580,362.4M612,378.8L620,381.7M636,388.8L644,391.9M644,391.9L652,394.7M652,394.7L660,396.7M660,396.7L668,398.4M668,398.4L676,399.8" fill="none" stroke="#ffff00" stroke-width="2.3" stroke-linecap="butt"/>
<path d="M148,397.7L156,391.5M156,391.5L164,387.4M196,380.5L204,376.4M276,363.1L284,359.1M300,354.3L308,349.4M308,349.4L316,342.8M316,342.8L324,337.5M324,337.5L332,331.7M332,331.7L340,326.4M340,326.4L348,321.1M348,321.1L356,315.6M508,316.1L516,319.5M516,319.5L524,325.8M524,325.8L532,332.4M532,332.4L540,338.4M540,338.4L548,344.2M548,344.2L556,350.7M556,350.7L564,356.2M564,356.2L572,359.5M580,362.4L588,366.7M588,366.7L596,371.3M596,371.3L604,375.3M604,375.3L612,378.8M620,381.7L628,385.3M628,385.3L636,388.8" fill="none" stroke="#ffff00" stroke-width="2.7" stroke-linecap="butt"/>
<line x1="12" y1="302.5" x2="678" y2="302.5" stroke="#c0c0c0" stroke-width="1" stroke-dasharray="3 3" stroke-dashoffset="5"/>
<line x1="12" y1="313.5" x2="678" y2="313.5" stroke="#c0c0c0" stroke-width="1" stroke-dasharray="3 3" stroke-dashoffset="5"/>
<line x1="12" y1="331.5" x2="678" y2="331.5" stroke="#c0c0c0" stroke-width="1" stroke-dasharray="3 3" stroke-dashoffset="5"/>
<line x1="12" y1="359.5" x2="678" y2="359.5" stroke="#c0c0c0" stroke-width="1" stroke-dasharray="3 3" stroke-dashoffset="5"/>
<line x1="12" y1="388.5" x2="678" y2="388.5" stroke="#c0c0c0" stroke-width="1" stroke-dasharray="3 3" stroke-dashoffset="5"/>
<line x1="12" y1="405.5" x2="678" y2="405.5" stroke="#c0c0c0" stroke-width="1" stroke-dasharray="3 3" stroke-dashoffset="5"/>
<rect x="11" y="478" width="3" height="46" fill="#c0c0c0"/>
<rect x="19" y="478" width="3" height="48" fill="#c0c0c0"/>
<rect x="27" y="478" width="3" height="55" fill="#c0c0c0"/>
<rect x="35" y="478" width="3" height="60" fill="#c0c0c0"/>
<rect x="43" y="478" width="3" height="63" fill="#c0c0c0"/>
<rect x="51" y="478" width="3" height="66" fill="#c0c0c0"/>
<rect x="59" y="478" width="3" height="67" fill="#c0c0c0"/>
<rect x="67" y="478" width="3" height="59" fill="#c0c0c0"/>
<rect x="75" y="478" width="3" height="53" fill="#c0c0c0"/>
<rect x="83" y="478" width="3" height="48" fill="#c0c0c0"/>
<rect x="91" y="478" width="3" height="43" fill="#c0c0c0"/>
<rect x="99" y="478" width="3" height="39" fill="#c0c0c0"/>
<rect x="107" y="478" width="3" height="33" fill="#c0c0c0"/>
<rect x="115" y="478" width="3" height="25" fill="#c0c0c0"/>
<rect x="123" y="478" width="3" height="21" fill="#c0c0c0"/>
<rect x="131" y="478" width="3" height="14" fill="#c0c0c0"/>
<rect x="139" y="478" width="3" height="15" fill="#c0c0c0"/>
<rect x="147" y="478" width="3" height="13" fill="#c0c0c0"/>
<rect x="155" y="475" width="3" height="4" fill="#c0c0c0"/>
<rect x="163" y="466" width="3" height="13" fill="#c0c0c0"/>
<rect x="171" y="461" width="3" height="18" fill="#c0c0c0"/>
<rect x="179" y="459" width="3" height="20" fill="#c0c0c0"/>
<rect x="187" y="458" width="3" height="21" fill="#c0c0c0"/>
<rect x="195" y="453" width="3" height="26" fill="#c0c0c0"/>
<rect x="203" y="449" width="3" height="30" fill="#c0c0c0"/>
<rect x="211" y="448" width="3" height="31" fill="#c0c0c0"/>
<rect x="219" y="447" width="3" height="32" fill="#c0c0c0"/>
<rect x="227" y="448" width="3" height="31" fill="#c0c0c0"/>
<rect x="235" y="449" width="3" height="30" fill="#c0c0c0"/>
<rect x="243" y="448" width="3" height="31" fill="#c0c0c0"/>
<rect x="251" y="452" width="3" height="27" fill="#c0c0c0"/>
<rect x="259" y="455" width="3" height="24" fill="#c0c0c0"/>
<rect x="267" y="455" width="3" height="24" fill="#c0c0c0"/>
<rect x="275" y="455" width="3" height="24" fill="#c0c0c0"/>
<rect x="283" y="455" width="3" height="24" fill="#c0c0c0"/>
<rect x="291" y="455" width="3" height="24" fill="#c0c0c0"/>
<rect x="299" y="457" width="3" height="22" fill="#c0c0c0"/>
<rect x="307" y="454" width="3" height="25" fill="#c0c0c0"/>
<rect x="315" y="450" width="3" height="29" fill="#c0c0c0"/>
<rect x="323" y="448" width="3" height="31" fill="#c0c0c0"/>
<rect x="331" y="444" width="3" height="35" fill="#c0c0c0"/>
<rect x="339" y="440" width="3" height="39" fill="#c0c0c0"/>
<rect x="347" y="436" width="3" height="43" fill="#c0c0c0"/>
<rect x="355" y="431" width="3" height="48" fill="#c0c0c0"/>
<rect x="363" y="427" width="3" height="52" fill="#c0c0c0"/>
<rect x="371" y="426" width="3" height="53" fill="#c0c0c0"/>
<rect x="379" y="428" width="3" height="51" fill="#c0c0c0"/>
<rect x="387" y="428" width="3" height="51" fill="#c0c0c0"/>
<rect x="395" y="427" width="3" height="52" fill="#c0c0c0"/>
<rect x="403" y="432" width="3" height="47" fill="#c0c0c0"/>
<rect x="411" y="437" width="3" height="42" fill="#c0c0c0"/>
<rect x="419" y="444" width="3" height="35" fill="#c0c0c0"/>
<rect x="427" y="451" width="3" height="28" fill="#c0c0c0"/>
<rect x="435" y="457" width="3" height="22" fill="#c0c0c0"/>
<rect x="443" y="463" width="3" height="16" fill="#c0c0c0"/>
<rect x="451" y="465" width="3" height="14" fill="#c0c0c0"/>
<rect x="459" y="465" width="3" height="14" fill="#c0c0c0"/>
<rect x="467" y="466" width="3" height="13" fill="#c0c0c0"/>
<rect x="475" y="464" width="3" height="15" fill="#c0c0c0"/>
<rect x="483" y="464" width="3" height="15" fill="#c0c0c0"/>
<rect x="491" y="469" width="3" height="10" fill="#c0c0c0"/>
<rect x="499" y="473" width="3" height="6" fill="#c0c0c0"/>
<rect x="507" y="478" width="3" height="1" fill="#c0c0c0"/>
<rect x="515" y="478" width="3" height="7" fill="#c0c0c0"/>
<rect x="523" y="478" width="3" height="14" fill="#c0c0c0"/>
<rect x="531" y="478" width="3" height="26" fill="#c0c0c0"/>
<rect x="539" y="478" width="3" height="39" fill="#c0c0c0"/>
<rect x="547" y="478" width="3" height="42" fill="#c0c0c0"/>
<rect x="555" y="478" width="3" height="45" fill="#c0c0c0"/>
<rect x="563" y="478" width="3" height="48" fill="#c0c0c0"/>
<rect x="571" y="478" width="3" height="48" fill="#c0c0c0"/>
<rect x="579" y="478" width="3" height="48" fill="#c0c0c0"/>
<rect x="587" y="478" width="3" height="51" fill="#c0c0c0"/>
<rect x="595" y="478" width="3" height="54" fill="#c0c0c0"/>
<rect x="603" y="478" width="3" height="59" fill="#c0c0c0"/>
<rect x="611" y="478" width="3" height="64" fill="#c0c0c0"/>
<rect x="619" y="478" width="3" height="62" fill="#c0c0c0"/>
<rect x="627" y="478" width="3" height="63" fill="#c0c0c0"/>
<rect x="635" y="478" width="3" height="68" fill="#c0c0c0"/>
<rect x="643" y="478" width="3" height="68" fill="#c0c0c0"/>
<rect x="651" y="478" width="3" height="60" fill="#c0c0c0"/>
<rect x="659" y="478" width="3" height="52" fill="#c0c0c0"/>
<rect x="667" y="478" width="3" height="46" fill="#c0c0c0"/>
<rect x="675" y="478" width="3" height="38" fill="#c0c0c0"/>
<polyline points="12,505.0 20,509.1 28,514.3 36,520.7 44,526.1 52,530.3 60,533.8 68,533.8 76,534.3 84,534.5 92,534.3 100,532.3 108,529.8 116,524.9 124,518.6 132,513.4 140,508.7 148,505.0 156,498.8 164,492.4 172,487.0 180,482.1 188,477.2 196,471.8 204,467.0 212,462.8 220,457.7 228,454.7 236,452.5 244,451.5 252,450.6 260,450.0 268,450.7 276,451.5 284,451.8 292,452.5 300,453.7 308,454.0 316,454.0 324,454.0 332,453.7 340,451.0 348,449.1 356,446.1 364,443.3 372,440.4 380,437.5 388,434.3 396,432.1 404,431.1 412,430.8 420,431.1 428,433.3 436,437.3 444,441.1 452,444.8 460,449.0 468,453.5 476,458.0 484,461.0 492,463.3 500,465.4 508,467.3 516,470.0 524,472.8 532,476.9 540,483.6 548,490.2 556,496.0 564,501.5 572,506.9 580,512.1 588,517.3 596,522.4 604,525.7 612,528.6 620,530.6 628,532.5 636,533.8 644,536.1 652,537.7 660,537.7 668,537.0 676,536.1" fill="none" stroke="#ff0000" stroke-width="2" stroke-linejoin="round" stroke-linecap="square"/>
<path d="M92,534.3L100,532.3M100,532.3L108,529.8M220,457.7L228,454.7M228,454.7L236,452.5M236,452.5L244,451.5M292,452.5L300,453.7M332,453.7L340,451.0M340,451.0L348,449.1M348,449.1L356,446.1M356,446.1L364,443.3M364,443.3L372,440.4M372,440.4L380,437.5M380,437.5L388,434.3M388,434.3L396,432.1M396,432.1L404,431.1M420,431.1L428,433.3M476,458.0L484,461.0M484,461.0L492,463.3M492,463.3L500,465.4M500,465.4L508,467.3M508,467.3L516,470.0M516,470.0L524,472.8M604,525.7L612,528.6M612,528.6L620,530.6M620,530.6L628,532.5M628,532.5L636,533.8M636,533.8L644,536.1M644,536.1L652,537.7" fill="none" stroke="#ff0000" stroke-width="2.3" stroke-linecap="butt"/>
<path d="M12,505.0L20,509.1M20,509.1L28,514.3M28,514.3L36,520.7M36,520.7L44,526.1M44,526.1L52,530.3M52,530.3L60,533.8M108,529.8L116,524.9M116,524.9L124,518.6M124,518.6L132,513.4M132,513.4L140,508.7M140,508.7L148,505.0M148,505.0L156,498.8M156,498.8L164,492.4M164,492.4L172,487.0M172,487.0L180,482.1M180,482.1L188,477.2M188,477.2L196,471.8M196,471.8L204,467.0M204,467.0L212,462.8M212,462.8L220,457.7M428,433.3L436,437.3M436,437.3L444,441.1M444,441.1L452,444.8M452,444.8L460,449.0M460,449.0L468,453.5M468,453.5L476,458.0M524,472.8L532,476.9M532,476.9L540,483.6M540,483.6L548,490.2M548,490.2L556,496.0M556,496.0L564,501.5M564,501.5L572,506.9M572,506.9L580,512.1M580,512.1L588,517.3M588,517.3L596,522.4M596,522.4L604,525.7" fill="none" stroke="#ff0000" stroke-width="2.7" stroke-linecap="butt"/>
</g>
<polygon points="15,40 22,40 18.5,44" fill="#fff"/>
<text x="27.4" y="45" textLength="50.2" lengthAdjust="spacingAndGlyphs">EURJPY,M5</text>
<text x="84.8" y="45" textLength="31.3" lengthAdjust="spacingAndGlyphs">143.667</text>
<text x="120.2" y="45" textLength="32" lengthAdjust="spacingAndGlyphs">143.728</text>
<text x="156.9" y="45" textLength="32" lengthAdjust="spacingAndGlyphs">143.664</text>
<text x="193" y="45" textLength="32" lengthAdjust="spacingAndGlyphs">143.724</text>
<text x="16.3" y="302" textLength="108.3" lengthAdjust="spacingAndGlyphs">R(9,26,52) -71.7 81.1 63.1</text>
<text x="16.7" y="431.5" textLength="127.5" lengthAdjust="spacingAndGlyphs">MACD(12,26,9) 0.0481 0.0635</text>
<text x="684.5" y="51.5" textLength="32.8" lengthAdjust="spacingAndGlyphs">141.395</text>
<text x="684.5" y="85.5" textLength="32.8" lengthAdjust="spacingAndGlyphs">141.305</text>
<text x="684.5" y="118.5" textLength="32.8" lengthAdjust="spacingAndGlyphs">141.220</text>
<text x="684.5" y="152.5" textLength="32.8" lengthAdjust="spacingAndGlyphs">141.130</text>
<text x="684.5" y="186.5" textLength="32.8" lengthAdjust="spacingAndGlyphs">141.040</text>
<text x="684.5" y="219.5" textLength="32.8" lengthAdjust="spacingAndGlyphs">140.955</text>
<text x="684.5" y="253.5" textLength="32.8" lengthAdjust="spacingAndGlyphs">140.865</text>
<text x="684.5" y="286.5" textLength="32.8" lengthAdjust="spacingAndGlyphs">140.780</text>
<text x="681.6" y="299.6">120</text>
<text x="681.6" y="305.8">100</text>
<text x="681.6" y="316.8">80</text>
<text x="681.6" y="334.6">50</text>
<text x="681.6" y="362.6">0.00</text>
<text x="681.6" y="391.8">-50</text>
<text x="681.6" y="408.3">-80</text>
<text x="681.6" y="414.3">-100</text>
<text x="681.6" y="429.8">0.0727</text>
<text x="681.6" y="481.6">0.00</text>
<text x="681.6" y="548.0999999999999">-0.0906</text>
<text x="11.3" y="564.3">31 Jan 2023</text>
<text x="75.3" y="564.3">31 Jan 11:05</text>
<text x="139.3" y="564.3">31 Jan 11:45</text>
<text x="203.3" y="564.3">31 Jan 12:25</text>
<text x="267.3" y="564.3">31 Jan 13:05</text>
<text x="331.3" y="564.3">31 Jan 13:45</text>
<text x="395.3" y="564.3">31 Jan 14:25</text>
<text x="459.3" y="564.3">31 Jan 15:05</text>
<text x="523.3" y="564.3">31 Jan 15:45</text>
<text x="587.3" y="564.3">31 Jan 16:25</text>
<text x="651.3" y="564.3">31 Jan 17:05</text>
<text x="29.5" y="22.1" textLength="57" lengthAdjust="spacingAndGlyphs" class="t">EURJPY,M5</text>
<g shape-rendering="crispEdges">
<rect x="10" y="10" width="12" height="9" fill="#3d7dff"/>
<rect x="11" y="12" width="10" height="6" fill="#fff"/>
<line x1="10" y1="10.5" x2="22" y2="10.5" stroke="#2f8f7f" stroke-dasharray="1 2" stroke-dashoffset="-1"/>
<line x1="10.5" y1="11" x2="10.5" y2="19" stroke="#2f8f7f" stroke-dasharray="1 2"/>
<rect x="12" y="13" width="2" height="1" fill="#3d7dff"/>
<rect x="12" y="14" width="1" height="1" fill="#3d7dff"/>
<rect x="13" y="12" width="1" height="1" fill="#3d7dff"/>
<rect x="16" y="13" width="2" height="1" fill="#3d7dff"/>
<rect x="17" y="14" width="1" height="1" fill="#3d7dff"/>
<rect x="16" y="12" width="1" height="1" fill="#3d7dff"/>
<rect x="13" y="15" width="11" height="9" fill="#3d7dff"/>
<rect x="14" y="17" width="9" height="6" fill="#fff"/>
<line x1="13" y1="15.5" x2="24" y2="15.5" stroke="#2f8f7f" stroke-dasharray="1 2" stroke-dashoffset="-1"/>
<line x1="13" y1="23.5" x2="24" y2="23.5" stroke="#2f8f7f" stroke-dasharray="1 2"/>
<line x1="13.5" y1="16" x2="13.5" y2="24" stroke="#2f8f7f" stroke-dasharray="1 2"/>
<line x1="23.5" y1="16" x2="23.5" y2="24" stroke="#2f8f7f" stroke-dasharray="1 2"/>
<rect x="15" y="18" width="1" height="1" fill="#3d7dff"/>
<rect x="16" y="19" width="1" height="1" fill="#3d7dff"/>
<rect x="16" y="20" width="1" height="1" fill="#3d7dff"/>
<rect x="17" y="21" width="1" height="1" fill="#3d7dff"/>
<rect x="18" y="20" width="1" height="1" fill="#3d7dff"/>
<rect x="18" y="19" width="1" height="1" fill="#3d7dff"/>
<rect x="19" y="18" width="1" height="1" fill="#3d7dff"/>
<rect x="20" y="19" width="1" height="1" fill="#3d7dff"/>
<rect x="20" y="20" width="1" height="1" fill="#3d7dff"/>
<rect x="21" y="21" width="1" height="1" fill="#3d7dff"/>
</g>
<rect x="624.5" y="8.5" width="31" height="17" rx="2.5" ry="2.5" fill="url(#bt)" stroke="#4f5f7a"/>
<rect x="625.5" y="9.5" width="29" height="15" rx="1.5" ry="1.5" fill="none" stroke="#fff" stroke-opacity="0.45"/>
<rect x="658.5" y="8.5" width="31" height="17" rx="2.5" ry="2.5" fill="url(#bt)" stroke="#4f5f7a"/>
<rect x="659.5" y="9.5" width="29" height="15" rx="1.5" ry="1.5" fill="none" stroke="#fff" stroke-opacity="0.45"/>
<rect x="692.5" y="8.5" width="31" height="17" rx="2.5" ry="2.5" fill="url(#cl)" stroke="#431a22"/>
<rect x="693.5" y="9.5" width="29" height="15" rx="1.5" ry="1.5" fill="none" stroke="#fff" stroke-opacity="0.45"/>
<rect x="634.5" y="16.5" width="10" height="4" rx="1" fill="#ebebeb" stroke="#4a5368"/>
<rect x="668.5" y="12.5" width="10" height="8" rx="1" fill="#ebebeb" stroke="#4a5368"/>
<rect x="671.5" y="15.5" width="4" height="2" fill="#8aa3c6" stroke="#4a5368"/>
<path d="M702.3,12.4h3.9l1.5,1.8l1.5,-1.8h3.9l-3.3,4.1l3.3,4.1h-3.9l-1.5,-1.8l-1.5,1.8h-3.9l3.3,-4.1z" fill="#f0f0f2" stroke="#3d3842" stroke-width="1" stroke-linejoin="round"/>
</svg></body></html>
